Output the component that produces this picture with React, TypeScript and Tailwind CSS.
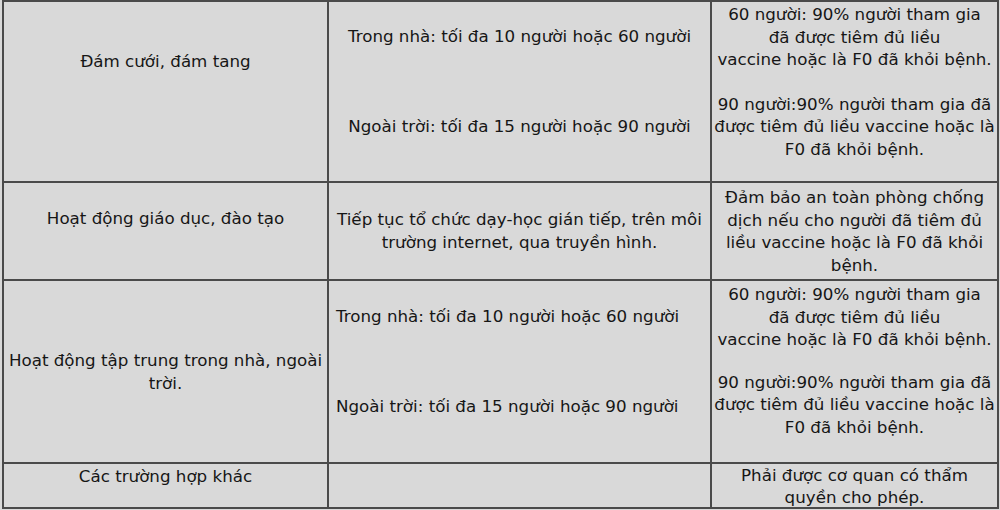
import React from "react";

const Cell: React.FC<{ className?: string; children?: React.ReactNode }> = ({ className = "", children }) => (
	<div className={`border-r-2 border-b-2 border-[#4a4a4a] ${className}`}>{children}</div>
);

const Line: React.FC<{ children: React.ReactNode; className?: string }> = ({ children, className = "" }) => (
	<div className={`whitespace-nowrap ${className}`}>{children}</div>
);

export default function App() {
	return (
		<div className="w-[1000px] h-[510px] overflow-hidden bg-[#d9d9d9] text-[#161616] text-[16.7px] leading-[22.5px] font-['DejaVu_Sans',sans-serif]">
			<div className="ml-[2px] w-[997px] grid grid-cols-[325px_383px_287px] grid-rows-[181px_98px_183px_45px] border-t-2 border-l-2 border-[#4a4a4a]">
				{/* row 1 */}
				<Cell className="pt-[48px] text-center">
					<Line>Đám cưới, đám tang</Line>
				</Cell>
				<Cell className="pt-[23px] text-center">
					<Line>Trong nhà: tối đa 10 người hoặc 60 người</Line>
					<Line className="mt-[67px]">Ngoài trời: tối đa 15 người hoặc 90 người</Line>
				</Cell>
				<Cell className="pt-[1px] text-center">
					<Line>60 người: 90% người tham gia</Line>
					<Line>đã được tiêm đủ liều</Line>
					<Line>vaccine hoặc là F0 đã khỏi bệnh.</Line>
					<Line className="mt-[22px]">90 người:90% người tham gia đã</Line>
					<Line>được tiêm đủ liều vaccine hoặc là</Line>
					<Line>F0 đã khỏi bệnh.</Line>
				</Cell>

				{/* row 2 */}
				<Cell className="pt-[24px] text-center">
					<Line>Hoạt động giáo dục, đào tạo</Line>
				</Cell>
				<Cell className="pt-[25px] text-center">
					<Line>Tiếp tục tổ chức dạy-học gián tiếp, trên môi</Line>
					<Line>trường internet, qua truyền hình.</Line>
				</Cell>
				<Cell className="pt-[3px] text-center">
					<Line>Đảm bảo an toàn phòng chống</Line>
					<Line>dịch nếu cho người đã tiêm đủ</Line>
					<Line>liều vaccine hoặc là F0 đã khỏi</Line>
					<Line>bệnh.</Line>
				</Cell>

				{/* row 3 */}
				<Cell className="flex flex-col justify-center text-center">
					<Line>Hoạt động tập trung trong nhà, ngoài</Line>
					<Line>trời.</Line>
				</Cell>
				<Cell className="pt-[24px] pl-[7px]">
					<Line>Trong nhà: tối đa 10 người hoặc 60 người</Line>
					<Line className="mt-[67px]">Ngoài trời: tối đa 15 người hoặc 90 người</Line>
				</Cell>
				<Cell className="pt-[2px] text-center">
					<Line>60 người: 90% người tham gia</Line>
					<Line>đã được tiêm đủ liều</Line>
					<Line>vaccine hoặc là F0 đã khỏi bệnh.</Line>
					<Line className="mt-[20px]">90 người:90% người tham gia đã</Line>
					<Line>được tiêm đủ liều vaccine hoặc là</Line>
					<Line>F0 đã khỏi bệnh.</Line>
				</Cell>

				{/* row 4 */}
				<Cell className="pt-[1px] text-center">
					<Line>Các trường hợp khác</Line>
				</Cell>
				<Cell />
				<Cell className="pt-[1px] text-center leading-[21.5px]">
					<Line>Phải được cơ quan có thẩm</Line>
					<Line>quyền cho phép.</Line>
				</Cell>
			</div>
		</div>
	);
}
